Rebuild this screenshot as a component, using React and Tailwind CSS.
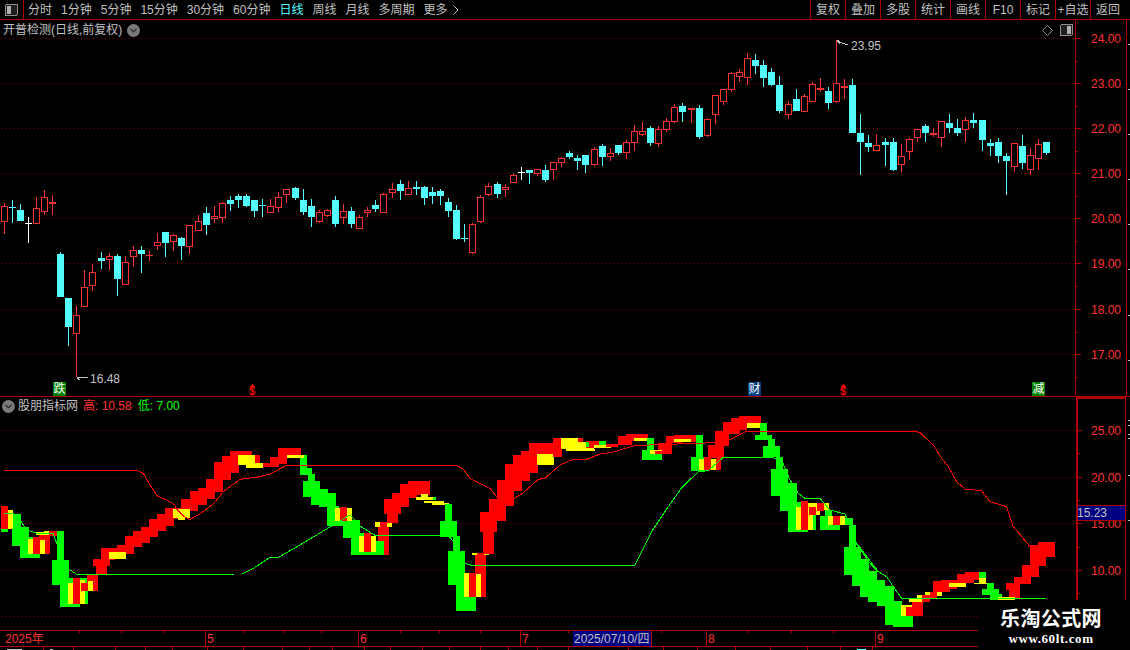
import { ChevronDown } from 'lucide-react'

const RED = '#ff3232'
const CYAN = '#54ffff'
const LINE = '#b00000'
const GRID = '#8c0000'
const FILL = { r: '#ff0000', g: '#00ff00', y: '#ffff00' }

const TABS = ['分时', '1分钟', '5分钟', '15分钟', '30分钟', '60分钟', '日线', '周线', '月线', '多周期']
const BUTTONS = ['复权', '叠加', '多股', '统计', '画线', 'F10', '标记', '+自选', '返回']

// candles: type, body top, body bottom, wick top, wick bottom (pixel rows)
const CANDLES = [
  ['r',206,222,203,234],['c',207,208,200,223],['c',210,221,204,221],['w',223,224,217,243],['r',208,224,197,224],
  ['r',197,212,190,215],['r',202,204,195,215],['c',254,297,252,297],['c',298,327,298,346],['r',315,334,306,377],
  ['r',287,307,270,307],['r',272,286,264,291],['c',258,261,252,269],['r',256,260,253,270],['c',256,279,254,296],
  ['r',262,285,256,285],['r',250,257,246,267],['c',250,254,246,273],['r',255,256,251,261],['r',242,246,233,250],
  ['c',232,243,232,257],['r',235,242,234,251],['c',238,246,237,260],['r',225,247,225,254],['r',221,231,215,231],
  ['c',213,225,207,235],['r',216,219,206,223],['r',203,218,202,223],['c',200,204,196,211],['c',196,200,194,208],
  ['c',196,206,194,207],['c',200,211,200,217],['c',205,206,199,217],['r',206,213,199,213],['r',197,208,192,212],
  ['r',189,195,189,203],['c',188,198,187,200],['c',200,212,189,215],['c',206,217,199,227],['r',212,222,210,223],
  ['r',210,216,209,217],['c',200,224,196,227],['r',211,218,204,224],['c',211,224,207,228],['r',217,229,215,229],
  ['r',210,213,207,217],['c',205,209,200,212],['r',194,213,193,213],['r',189,193,183,198],['c',184,191,180,200],
  ['r',188,195,181,195],['c',187,189,181,195],['c',187,198,186,205],['c',192,196,187,204],['c',191,196,189,205],
  ['c',202,211,198,217],['c',210,239,205,240],['c',238,239,224,242],['r',224,253,223,254],['r',197,222,195,223],
  ['r',186,195,183,196],['c',184,194,182,198],['r',187,190,184,197],['r',175,183,173,183],['w',172,173,167,180],
  ['c',170,173,170,184],['r',169,174,169,176],['c',170,180,165,182],['r',162,170,162,180],['r',158,163,157,167],
  ['c',153,157,151,159],['c',158,161,155,170],['c',155,165,155,173],['r',149,165,147,166],['c',146,157,144,166],
  ['r',153,157,148,161],['c',145,153,145,155],['r',142,153,140,159],['r',131,143,125,151],['r',131,135,122,136],
  ['c',128,143,126,146],['r',129,144,126,147],['r',121,130,118,132],['r',107,122,104,123],['c',106,112,103,122],
  ['r',108,110,108,123],['c',108,137,105,139],['r',119,136,118,137],['r',95,115,95,124],['r',89,102,89,105],
  ['r',73,90,72,92],['r',72,77,69,82],['r',58,78,53,85],['c',60,66,54,74],['c',65,78,60,87],
  ['c',72,85,68,86],['c',85,111,76,113],['r',104,115,101,119],['c',99,111,89,111],['r',96,112,94,112],
  ['r',84,102,82,102],['r',88,90,78,92],['c',91,103,87,109],['r',83,102,40,103],['r',86,88,79,99],
  ['c',85,133,79,133],['c',133,142,114,175],['c',143,147,135,152],['r',145,151,134,151],['c',142,145,138,166],
  ['c',142,170,138,171],['r',156,165,144,172],['r',139,152,138,160],['r',129,138,129,142],['c',126,133,124,142],
  ['r',133,135,129,137],['r',121,138,121,147],['c',123,128,114,133],['c',128,133,119,136],['r',120,130,117,142],
  ['c',120,123,113,128],['c',120,140,120,151],['c',143,146,139,156],['c',142,156,138,163],['c',156,161,153,195],
  ['r',143,167,143,172],['c',146,163,135,169],['r',155,170,148,175],['r',144,159,139,170],['c',142,153,142,155],
]
const SHIFTS = [12, 24, 36, 48, 61, 73, 85, 97, 109, 121]
const candleLeft = (i) => 8 * i + 1 + SHIFTS.filter((b) => i >= b).length

// indicator blocks, traced in the coordinates of 3x crops: colour, x1, y1, x2, y2
const BLOCKS = [
  { ox: 0, list: [
    ['g',3,417,24,426],['g',36,372,63,468],['g',60,411,87,504],['g',84,441,120,504],
    ['r',3,348,24,417],['y',24,360,39,417],
    ['y',84,447,99,492],['r',99,441,120,492],['y',120,450,135,492],['r',135,435,150,492],['r',117,435,135,450],
    ['y',108,426,150,435],['r',147,423,171,438],['y',132,423,147,429],
    ['g',171,423,192,510],['g',156,510,207,585],['g',180,585,240,651],['g',204,565,264,642],
    ['y',204,579,219,642],['r',219,564,240,642],['y',240,570,255,642],['r',261,555,294,603],['r',243,579,264,603],['y',264,573,279,603],
    ['r',288,525,321,552],['r',279,507,330,528],['r',303,474,345,510],['r',327,474,378,486],['r',351,465,402,492],['y',327,486,378,507],
    ['r',375,438,426,471],['r',399,423,450,459],['r',423,411,474,441],['r',447,387,498,423],['r',471,372,522,408],
    ['r',495,354,546,387],['r',519,354,570,357],['r',543,327,594,363],['y',519,357,570,384],['y',534,384,555,390],
    ['r',570,303,621,345],['r',594,294,645,327],['r',618,267,669,306],['r',642,216,693,270],['r',666,198,717,249],
    ['r',690,183,756,225],['y',714,195,765,225],['y',738,219,789,234],['r',765,195,780,219],['r',789,219,837,232],
    ['r',810,201,861,222],['r',834,174,900,204],['y',861,195,900,204],
  ] },
  { ox: 300, list: [
    ['r',0,174,3,195],['g',0,195,21,234],['y',0,195,12,204],['g',0,234,36,255],['g',24,252,45,273],['g',9,273,60,321],
    ['g',33,297,84,345],['g',57,309,108,351],['g',81,348,117,408],['g',81,393,180,408],['g',129,390,180,444],
    ['g',153,429,204,495],['g',153,465,267,495],['g',228,453,252,495],
    ['y',105,354,120,393],['r',120,351,141,393],['y',141,354,156,393],
    ['y',177,438,192,486],['r',192,429,213,486],['y',213,438,228,486],
    ['r',252,408,267,495],['r',234,408,252,453],['y',225,396,240,411],['r',240,396,261,411],['y',261,396,276,411],
    ['r',261,366,294,399],['r',252,327,303,372],['r',276,309,327,351],['r',300,282,351,324],['r',324,273,390,315],
    ['y',348,321,408,330],['y',363,312,384,321],['y',372,333,396,339],['y',396,333,432,345],['y',432,339,447,345],['g',399,321,408,330],
    ['g',435,342,456,393],['g',420,393,471,441],['g',459,438,480,483],['g',444,483,495,585],['g',468,585,528,663],
    ['y',492,549,507,621],['r',507,549,528,621],['y',528,552,543,621],['r',543,552,558,621],['r',525,495,558,552],
    ['y',516,489,531,495],['r',531,489,552,495],['y',552,489,567,495],['r',549,426,582,492],['r',540,366,591,426],
    ['r',567,327,618,393],['r',591,270,642,348],['r',615,222,666,303],['r',639,195,690,273],['r',663,183,714,249],
    ['r',687,159,786,192],['r',687,192,711,225],['y',711,192,762,225],['r',759,144,786,201],
    ['y',783,144,834,177],['y',798,177,885,183],['y',831,156,882,183],['r',834,144,849,156],
    ['r',858,153,900,174],['y',882,165,900,174],['g',858,156,867,171],['g',897,153,900,165],
  ] },
  { ox: 600, list: [
    ['g',0,153,18,164],['y',0,165,33,174],['r',18,162,54,170],['r',54,138,96,165],['r',78,132,144,153],['y',102,144,153,153],
    ['g',141,144,162,180],['g',126,180,186,210],['y',150,180,201,192],['r',165,183,186,192],['r',186,159,216,192],
    ['r',174,159,216,180],['r',198,138,246,159],['r',222,135,288,156],['y',222,147,273,156],
    ['g',288,135,309,201],['g',273,201,324,243],['y',297,207,312,240],['r',312,201,333,240],['y',333,207,348,240],['r',348,201,363,240],
    ['r',324,165,372,204],['r',345,123,387,168],['r',369,96,420,132],['r',393,84,440,120],['r',417,78,483,99],['y',441,99,492,114],
    ['g',480,99,501,135],['g',465,135,516,150],['g',504,147,525,168],['g',489,168,540,201],['g',528,201,549,237],
    ['g',513,237,564,318],['g',540,279,591,363],['g',564,336,624,426],['y',588,351,603,420],['r',603,333,624,420],
    ['y',624,339,639,420],['g',639,351,648,420],['y',624,339,687,351],['r',627,351,648,375],['y',648,351,660,375],
    ['r',651,339,672,363],['y',672,342,687,360],['g',660,378,720,420],['g',675,360,696,378],['y',684,378,699,405],
    ['r',699,378,720,405],['y',720,378,735,405],['g',735,384,759,405],['g',747,405,768,471],['g',732,471,783,555],
    ['g',756,507,807,588],['g',780,543,831,621],['g',804,570,840,636],['g',831,636,840,648],
  ] },
  { ox: 850, list: [
    ['g',0,384,9,405],['g',0,405,18,470],['g',0,470,30,555],['g',6,507,57,588],['g',30,543,81,621],['g',54,570,105,636],
    ['g',81,588,132,648],['g',105,633,156,705],['g',129,678,189,711],
    ['y',153,645,204,678],['r',168,651,189,678],['r',186,633,219,678],['y',177,627,228,636],['y',201,615,216,627],
    ['r',216,615,240,636],['y',225,606,240,615],['r',240,606,261,624],['y',261,606,276,618],['r',249,573,300,606],
    ['r',273,570,321,597],['y',297,579,348,591],['r',321,552,372,579],['r',345,546,387,570],['g',387,546,408,564],
    ['y',387,564,408,579],['y',372,579,420,582],['g',411,579,432,597],['g',396,597,447,615],['g',420,612,456,630],
    ['r',477,579,510,627],['r',468,579,510,600],['y',444,621,495,630],['r',492,561,543,582],['r',516,525,567,561],
    ['r',540,465,588,528],['r',564,456,615,501],
  ] },
]

const RED_LINE = [
  [0,[[12,241],[408,241],[430,250],[450,285],[472,318],[500,330],[525,345],[530,358],[550,378],[570,388],[600,372],[640,342],[670,305],[720,268],[780,260],[810,252],[860,226],[900,226]]],
  [300,[[0,226],[470,226],[490,238],[510,265],[550,285],[570,295],[590,320],[640,327],[665,312],[715,268],[735,265],[780,225],[820,208],[860,208],[900,192]]],
  [600,[[0,192],[40,186],[100,168],[120,166],[345,158],[390,148],[440,124],[750,124]]],
  [850,[[0,124],[195,124],[210,128],[250,165],[275,205],[295,230],[320,275],[345,297],[395,302],[420,335],[470,350],[490,410],[540,470]]],
]
const GREEN_LINE = [
  [0,[[12,370],[40,370],[60,390],[80,420],[110,430],[160,432],[170,460],[190,510],[208,538],[230,553],[725,552],[760,535],[810,502],[835,502],[900,465]]],
  [300,[[0,465],[50,435],[95,408],[150,375],[160,385],[180,408],[225,436],[430,436],[450,442],[460,455],[495,520],[515,526],[900,526]]],
  [600,[[0,526],[105,526],[155,425],[205,350],[245,293],[295,245],[325,242],[370,202],[515,202],[545,210],[570,270],[595,310],[615,325],[660,325],[690,360],[735,372],[770,460],[835,545]]],
  [850,[[20,462],[60,520],[85,545],[110,560],[130,590],[155,625],[588,625]]],
]

const toPoints = (ox, pts) => pts.map(([x, y]) => `${ox + x / 3},${390 + y / 3}`).join(' ')

const UPPER_GRID = [38, 83, 128, 173, 218, 263, 309, 354]
const UPPER_LABELS = ['24.00', '23.00', '22.00', '21.00', '20.00', '19.00', '18.00', '17.00']
const LOWER_GRID = [430, 477, 523, 570, 616]
const LOWER_LABELS = [[430, '25.00'], [477, '20.00'], [523, '15.00'], [570, '10.00']]

const MONTHS = [[205, '5'], [358, '6'], [520, '7'], [706, '8'], [875, '9']]
const TOP_TICKS = [79, 121, 163, 243, 283, 321, 400, 439, 480, 568, 661, 748, 791, 833]
const BOTTOM_TICKS = [43, 73, 115, 145, 172, 207, 243, 282, 309, 332, 364, 390, 422, 449, 480, 508, 537, 568, 628, 663, 697, 735, 770, 807, 840, 872]

function Candle({ c, i }) {
  const [type, top, bottom, wickTop, wickBottom] = c
  const x = candleLeft(i)
  const color = type === 'r' ? RED : type === 'c' ? CYAN : '#ffffff'
  const hollow = type === 'r' && bottom - top > 2
  return (
    <g>
      <rect x={x + 3} y={wickTop} width="1" height={wickBottom - wickTop} fill={color} />
      {hollow ? (
        <rect x={x + 0.5} y={top + 0.5} width="6" height={bottom - top - 1} fill="#000" stroke={color} />
      ) : (
        <rect x={x} y={top} width="7" height={Math.max(bottom - top, 1)} fill={color} />
      )}
    </g>
  )
}

function Flag({ x, bg, label }) {
  return (
    <g>
      <rect x={x} y="382" width="13" height="14" fill={bg} />
      <text x={x + 0.5} y="393" fontSize="12" fill="#fff">{label}</text>
    </g>
  )
}

function Dollar({ x }) {
  return (
    <g fill="#ff0000">
      <polygon points={`${x + 3.5},384 ${x + 7},387 ${x},387`} />
      <text x={x} y="395" fontSize="11" fontWeight="700">$</text>
    </g>
  )
}

function PriceChart() {
  return (
    <svg viewBox="0 20 1075 376" width="1075" height="376" shapeRendering="crispEdges" className="block">
      {UPPER_GRID.map((y) => (
        <line key={y} x1="1" x2="1075" y1={y + 0.5} y2={y + 0.5} stroke={GRID} strokeDasharray="1 3" />
      ))}
      {CANDLES.map((c, i) => <Candle key={i} c={c} i={i} />)}
      <polyline points="88,377 79,377 77,378 80,380" fill="none" stroke="#c0c0c0" />
      <text x="90" y="383" fontSize="12" fill="#c0c0c0">16.48</text>
      <polyline points="848,45 842,43 837,40 840,44" fill="none" stroke="#c0c0c0" />
      <text x="851" y="50" fontSize="12" fill="#c0c0c0">23.95</text>
      <Flag x={53} bg="#008000" label="跌" />
      <Dollar x={249} />
      <Flag x={748} bg="#003c80" label="财" />
      <Dollar x={840} />
      <Flag x={1032} bg="#008000" label="减" />
    </svg>
  )
}

function IndicatorChart() {
  return (
    <svg viewBox="0 397 1076 233" width="1076" height="233" shapeRendering="crispEdges" className="block">
      {LOWER_GRID.map((y) => (
        <line key={y} x1="1" x2="1076" y1={y + 0.5} y2={y + 0.5} stroke={GRID} strokeDasharray="1 3" />
      ))}
      {BLOCKS.map(({ ox, list }) =>
        list.map(([k, x1, y1, x2, y2], i) => (
          <rect
            key={`${ox}-${i}`}
            x={Math.round(ox + x1 / 3)}
            y={Math.round(390 + y1 / 3)}
            width={Math.round(ox + x2 / 3) - Math.round(ox + x1 / 3)}
            height={Math.round(390 + y2 / 3) - Math.round(390 + y1 / 3)}
            fill={FILL[k]}
          />
        ))
      )}
      {RED_LINE.map(([ox, pts]) => (
        <polyline key={ox} points={toPoints(ox, pts)} fill="none" stroke="#ff0000" />
      ))}
      {GREEN_LINE.map(([ox, pts]) => (
        <polyline key={ox} points={toPoints(ox, pts)} fill="none" stroke="#00ff00" />
      ))}
    </svg>
  )
}

function UpperAxis() {
  return (
    <svg viewBox="1075 20 55 376" width="55" height="376" shapeRendering="crispEdges" className="block">
      <line x1="1075.5" x2="1075.5" y1="20" y2="396" stroke={LINE} />
      <line x1="1126.5" x2="1126.5" y1="20" y2="396" stroke={LINE} />
      {UPPER_GRID.map((y, i) => (
        <g key={y}>
          <line x1="1076" x2="1081" y1={y + 0.5} y2={y + 0.5} stroke={LINE} />
          <line x1="1076" x2="1078" y1={y + 23.5} y2={y + 23.5} stroke={LINE} />
          <text x="1091" y={y + 5} fontSize="12" fill={RED}>{UPPER_LABELS[i]}</text>
          <line x1="1128" x2="1130" y1={y + 6.5} y2={y + 6.5} stroke="#c0c0c0" />
        </g>
      ))}
    </svg>
  )
}

function LowerAxis() {
  return (
    <svg viewBox="1076 397 54 233" width="54" height="233" shapeRendering="crispEdges" className="block">
      <rect x="1076" y="397" width="2" height="233" fill={LINE} />
      <rect x="1076" y="397" width="50" height="2" fill={LINE} />
      <rect x="1125" y="397" width="1" height="233" fill={LINE} />
      {[453, 500, 547, 593].map((y) => (
        <line key={y} x1="1078" x2="1080" y1={y + 0.5} y2={y + 0.5} stroke={LINE} />
      ))}
      {LOWER_LABELS.map(([y, label]) => (
        <g key={y}>
          <line x1="1078" x2="1082" y1={y + 0.5} y2={y + 0.5} stroke={LINE} />
          <text x="1091" y={y + 5} fontSize="12" fill={RED}>{label}</text>
        </g>
      ))}
      <rect x="1077.5" y="505.5" width="48" height="15" fill="#000080" stroke={LINE} />
      <text x="1077" y="517" fontSize="12" fill="#c0c0c0">15.23</text>
      {[420, 425, 434, 438, 475, 520].map((y) => (
        <line key={y} x1="1128" x2="1130" y1={y + 0.5} y2={y + 0.5} stroke="#c0c0c0" />
      ))}
    </svg>
  )
}

function TimeAxis() {
  return (
    <svg viewBox="0 630 1130 20" width="1130" height="20" shapeRendering="crispEdges" className="block">
      <line x1="0" x2="978" y1="630.5" y2="630.5" stroke={LINE} />
      <line x1="0" x2="978" y1="646.5" y2="646.5" stroke={LINE} />
      {TOP_TICKS.map((x) => (
        <line key={x} x1={x + 0.5} x2={x + 0.5} y1="631" y2="633" stroke={LINE} />
      ))}
      {BOTTOM_TICKS.map((x) => (
        <line key={x} x1={x + 0.5} x2={x + 0.5} y1="647" y2="650" stroke={LINE} />
      ))}
      <text x="5" y="643" fontSize="12" fill={RED}>2025年</text>
      {MONTHS.map(([x, label]) => (
        <g key={x}>
          <line x1={x + 0.5} x2={x + 0.5} y1="631" y2="646" stroke={LINE} />
          <text x={x + 2} y="643" fontSize="12" fill={RED}>{label}</text>
        </g>
      ))}
      <rect x="573" y="631" width="78" height="15" fill="#000080" />
      <line x1="651.5" x2="651.5" y1="631" y2="646" stroke={LINE} />
      <text x="574" y="643" fontSize="12" fill="#c0c0c0">2025/07/10/四</text>
      <rect x="7" y="649" width="15" height="1" fill="#c0c0c0" />
      <rect x="50" y="649" width="3" height="1" fill="#c0c0c0" />
      <rect x="857" y="649" width="9" height="1" fill={CYAN} />
    </svg>
  )
}

function PanelIcon({ className, flip }) {
  return (
    <svg viewBox="0 0 13 12" width="13" height="12" className={className} shapeRendering="crispEdges">
      <rect x="0.5" y="0.5" width="12" height="11" rx="1.5" fill="#202020" stroke="#909090" />
      <rect x={flip ? 7 : 2} y="2" width="4" height="8" fill="#b0b0b0" />
    </svg>
  )
}

function RoundToggle() {
  return (
    <span className="w-[13px] h-[13px] rounded-full bg-[#7a7a7a] flex items-center justify-center">
      <ChevronDown size={11} strokeWidth={2.5} color="#222" />
    </span>
  )
}

export default function App() {
  return (
    <div className="relative w-[1130px] h-[650px] overflow-hidden bg-black flex flex-col font-['Liberation_Sans','Noto_Sans_CJK_SC',sans-serif] text-xs text-[#c0c0c0]">
      <div className="flex items-center h-[20px] border-b border-[#b00000]">
        <div className="w-[24px] h-full flex items-center justify-center border-r border-[#b00000]">
          <PanelIcon />
        </div>
        <div className="flex items-center gap-[9px] pl-[4px]">
          {TABS.map((t) => (
            <span key={t} className={t === '日线' ? 'text-[#54ffff]' : ''}>{t}</span>
          ))}
          <span className="flex items-center gap-[5px]">
            更多
            <svg width="6" height="10" viewBox="0 0 6 10" fill="none" stroke="#c0c0c0">
              <polyline points="0.5,0.5 5,5 0.5,9.5" />
            </svg>
          </span>
        </div>
        <div className="ml-auto flex h-full">
          {BUTTONS.map((b) => (
            <div key={b} className="w-[35px] h-full flex items-center justify-center border-l border-[#b00000]">{b}</div>
          ))}
          <div className="w-[5px]" />
        </div>
      </div>

      <div className="flex h-[377px] border-b border-[#b00000]">
        <div className="relative w-[1075px]">
          <PriceChart />
          <div className="absolute left-[3px] top-[2px] flex items-center gap-[5px]">
            <span>开普检测(日线,前复权)</span>
            <RoundToggle />
          </div>
          <div className="absolute right-[2px] top-[4px] flex items-center gap-[7px]">
            <svg width="11" height="11" viewBox="0 0 11 11" fill="none" stroke="#909090">
              <polygon points="5.5,0.5 10.5,5.5 5.5,10.5 0.5,5.5" />
            </svg>
            <PanelIcon flip />
          </div>
        </div>
        <UpperAxis />
      </div>

      <div className="flex h-[233px]">
        <div className="relative w-[1076px]">
          <IndicatorChart />
          <div className="absolute left-[2px] top-[1px] flex items-center">
            <RoundToggle />
            <span className="ml-[3px]">股朋指标网</span>
            <span className="ml-[5px] text-[#ff3232]">高: 10.58</span>
            <span className="ml-[6px] text-[#00ff00]">低: 7.00</span>
          </div>
        </div>
        <LowerAxis />
      </div>

      <TimeAxis />

      <div className="absolute left-[978px] top-[600px] w-[152px] h-[50px] bg-black flex flex-col items-center pt-[7px] pr-[6px]">
        <span className="text-[20px] leading-[24px] font-bold text-white tracking-[0.4px]">乐淘公式网</span>
        <span className="font-['Liberation_Serif',serif] text-[13px] leading-[15px] font-bold text-white tracking-[0.6px]">www.60lt.com</span>
      </div>
    </div>
  )
}
